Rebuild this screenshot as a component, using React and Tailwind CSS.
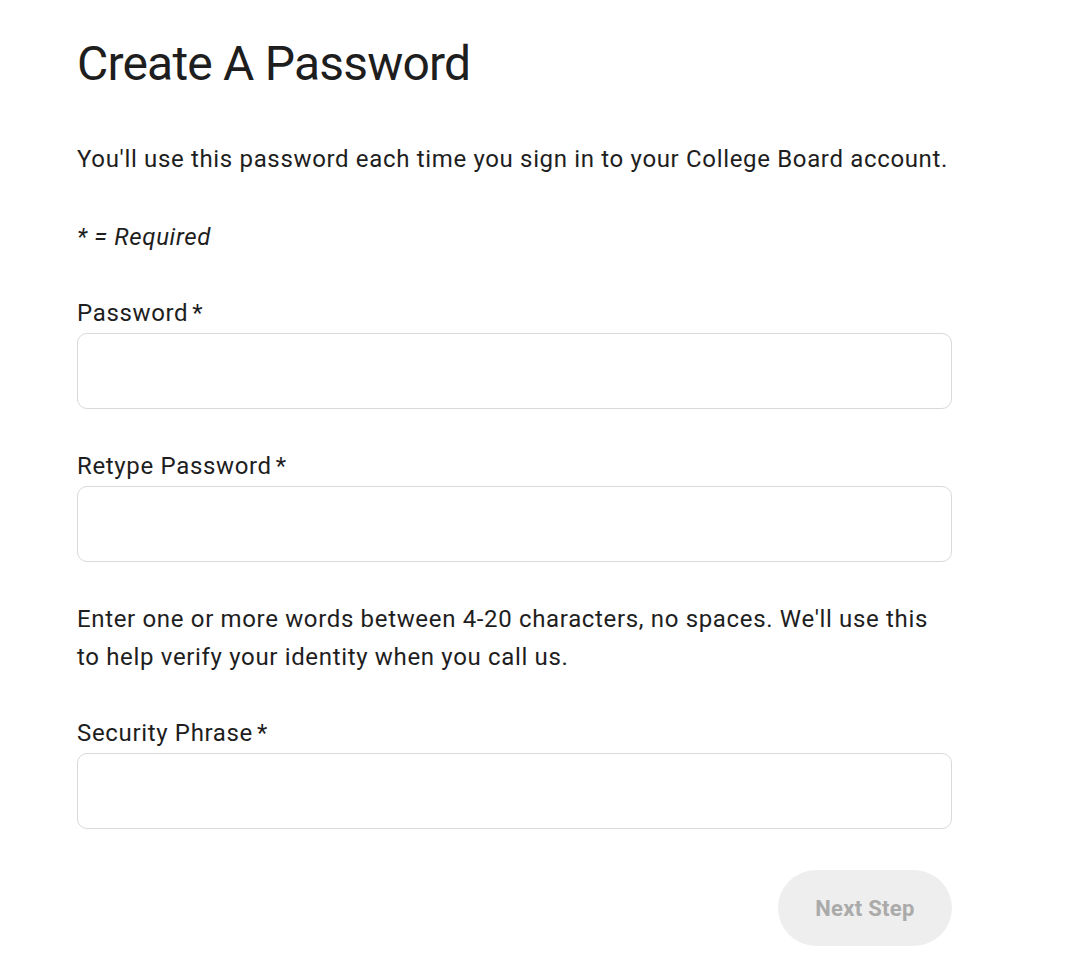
import React from 'react';

const font = { fontFamily: 'Roboto, "Liberation Sans", sans-serif' };

function Field({ label }) {
  return (
    <div>
      <label className="block text-[24px] leading-[38px] tracking-[0.66px] text-[#1e1e1e]">
        {label}
        <span className="ml-[4px]">*</span>
      </label>
      <input
        type="text"
        className="mt-px block w-full h-[76px] rounded-[10px] border border-[#d9d9d9] bg-white px-4 text-[24px] outline-none"
      />
    </div>
  );
}

export default function App() {
  return (
    <div className="min-h-screen bg-white" style={font}>
      <div className="ml-[77px] w-[875px] pt-[35px] pb-4">
        {/* Header */}
        <h1 className="text-[48px] leading-[58px] tracking-[-0.8px] font-normal text-[#1e1e1e]">
          Create A Password
        </h1>

        <p className="mt-[47px] text-[24px] leading-[38px] tracking-[0.66px] text-[#1e1e1e]">
          You'll use this password each time you sign in to your College Board account.
        </p>

        <p className="mt-[40px] text-[24px] leading-[38px] tracking-[0.66px] italic text-[#1e1e1e]">
          * = Required
        </p>

        <div className="mt-[38px] flex flex-col gap-[38px]">
          <Field label="Password" />
          <Field label="Retype Password" />

          <p className="text-[24px] leading-[38px] tracking-[0.66px] text-[#1e1e1e]">
            Enter one or more words between 4-20 characters, no spaces. We'll use this to help verify your identity when you call us.
          </p>

          <Field label="Security Phrase" />
        </div>

        <div className="mt-[41px] flex justify-end">
          <button
            disabled
            className="h-[76px] w-[174px] rounded-full bg-[#eeeeee] text-[22px] font-bold tracking-[0.3px] text-[#aaaaaa]"
          >
            Next Step
          </button>
        </div>
      </div>
    </div>
  );
}
